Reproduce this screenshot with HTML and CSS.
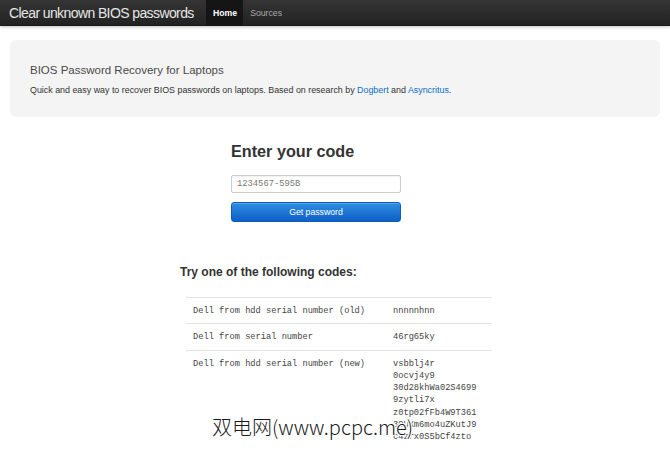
FILE: index.html
```html
<!DOCTYPE html>
<html>
<head>
<meta charset="utf-8">
<title>Clear unknown BIOS passwords</title>
<link rel="stylesheet" href="styles.css">
</head>
<body>
<div class="navbar">
  <a class="brand" href="#">Clear unknown BIOS passwords</a>
  <ul class="nav">
    <li class="active"><a href="#">Home</a></li>
    <li><a href="#">Sources</a></li>
  </ul>
</div>
<div class="container">
  <div class="hero">
    <h1>BIOS Password Recovery for Laptops</h1>
    <p>Quick and easy way to recover BIOS passwords on laptops. Based on research by <a href="#">Dogbert</a> and <a href="#">Asyncritus</a>.</p>
  </div>
  <div class="form-block">
    <h2>Enter your code</h2>
    <input class="code-input" type="text" value="1234567-595B">
    <button class="btn-primary">Get password</button>
  </div>
  <div class="results">
    <h3>Try one of the following codes:</h3>
    <table class="codes">
      <tr><td class="c1">Dell from hdd serial number (old)</td><td>nnnnnhnn</td></tr>
      <tr><td class="c1">Dell from serial number</td><td>46rg65ky</td></tr>
      <tr><td class="c1">Dell from hdd serial number (new)</td><td>vsbblj4r<br>0ocvj4y9<br>30d28khWa02S4699<br>9zytli7x<br>z0tp02fFb4W9T361<br>39UXm6mo4uZKutJ9<br>c4zrx0S5bCf4zto</td></tr>
    </table>
  </div>
</div>
<div class="watermark">双电网(www.pcpc.me)</div>
</body>
</html>
```
FILE: styles.css
```css
html, body {
  margin: 0;
  padding: 0;
  background: #fff;
  overflow: hidden;
}
body {
  font-family: "Liberation Sans", Arial, sans-serif;
  color: #333;
  width: 670px;
  height: 454px;
  position: relative;
}
.navbar {
  height: 26px;
  background: linear-gradient(#353535, #222);
  border-bottom: 1px solid #1a1a1a;
  box-shadow: 0 1px 3px rgba(0,0,0,0.25);
  display: flex;
  align-items: stretch;
  box-sizing: border-box;
}
.brand {
  color: #e6e6e6;
  text-decoration: none;
  font-size: 14px;
  letter-spacing: -0.6px;
  line-height: 26px;
  padding-left: 9px;
  width: 197px;
}
.nav {
  list-style: none;
  margin: 0;
  padding: 0;
  display: flex;
}
.nav li a {
  display: block;
  padding: 0 7px;
  line-height: 26px;
  font-size: 8.7px;
  color: #a8a8a8;
  text-decoration: none;
}
.nav li.active a {
  background: #151515;
  color: #fff;
  font-weight: bold;
  padding: 0 6px 0 7px;
}
.container {
  padding: 14px 10px 0;
}
.hero {
  background: #f4f4f4;
  border-radius: 6px;
  padding: 22px 20px 21px;
}
.hero h1 {
  margin: 0;
  font-size: 11.5px;
  line-height: 16px;
  font-weight: normal;
  color: #4a4a4a;
}
.hero p {
  margin: 6px 0 0;
  font-size: 8.9px;
  line-height: 12px;
  color: #333;
}
.hero a {
  color: #0a6fc2;
  text-decoration: none;
}
.form-block {
  margin: 24px 0 0 221px;
  width: 170px;
  display: flex;
  flex-direction: column;
}
.form-block h2 {
  margin: 0;
  font-size: 16.2px;
  line-height: 20px;
  font-weight: bold;
  color: #333;
}
.code-input {
  margin: 14px 0 0;
  height: 18px;
  box-sizing: border-box;
  border: 1px solid #ccc;
  border-radius: 2px;
  padding: 0 5px;
  font-family: "Liberation Mono", "Courier New", monospace;
  font-size: 8.8px;
  color: #777;
  box-shadow: inset 0 1px 1px rgba(0,0,0,0.06);
  outline: none;
}
.btn-primary {
  margin-top: 9px;
  height: 20px;
  border: 1px solid #0b5fb8;
  border-radius: 3px;
  background: linear-gradient(#2d8ee0, #0f5fc7);
  color: #fff;
  font-family: "Liberation Sans", Arial, sans-serif;
  font-size: 8.7px;
  padding: 0;
  box-shadow: inset 0 1px 0 rgba(255,255,255,0.2);
}
.results {
  margin: 42px 0 0 170px;
}
.results h3 {
  margin: 0;
  font-size: 12px;
  line-height: 16px;
  font-weight: bold;
  color: #333;
}
.codes {
  margin: 17px 0 0 6px;
  width: 306px;
  border-collapse: collapse;
  font-family: "Liberation Mono", "Courier New", monospace;
  font-size: 8.7px;
  color: #444;
}
.codes td {
  border-top: 1px solid #e2e2e2;
  padding: 7px 7px 6px;
  line-height: 12.3px;
  vertical-align: top;
  text-align: left;
}
.codes td.c1 {
  width: 186px;
}
.watermark {
  position: absolute;
  left: 212px;
  top: 414px;
  font-family: "Noto Sans CJK SC", sans-serif;
  font-size: 20px;
  font-weight: 300;
  line-height: 26px;
  color: #1a1a1a;
  text-shadow: 1px 0 0 #fff, -1px 0 0 #fff, 0 1px 0 #fff, 0 -1px 0 #fff, 1px 1px 0 #fff, -1px -1px 0 #fff, 1px -1px 0 #fff, -1px 1px 0 #fff;
}
```
